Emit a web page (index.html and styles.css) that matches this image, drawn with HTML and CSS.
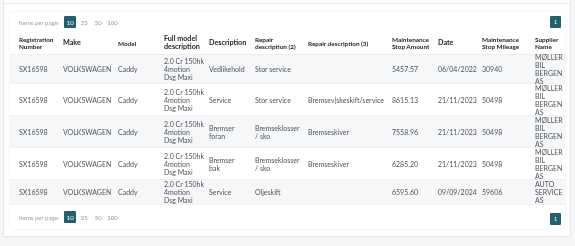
FILE: index.html
```html
<!DOCTYPE html>
<html>
<head>
<meta charset="utf-8">
<link rel="stylesheet" href="styles.css">
</head>
<body>
<div class="outer">
  <div class="topbar"></div>
  <div class="card">
    <div class="pager">
      <div class="sizes">
        <span class="label">Items per page:</span>
        <span class="size active">10</span>
        <span class="size">25</span>
        <span class="size">50</span>
        <span class="size">100</span>
      </div>
      <span class="page active">1</span>
    </div>
    <table class="grid">
      <colgroup>
        <col style="width:53px"><col style="width:55px"><col style="width:46px"><col style="width:45px"><col style="width:46px"><col style="width:53px"><col style="width:84px"><col style="width:46px"><col style="width:44px"><col style="width:53px"><col style="width:30px">
      </colgroup>
      <thead>
        <tr>
          <th class="sm">Registration Number</th>
          <th class="md">Make</th>
          <th class="sm">Model</th>
          <th class="md">Full model description</th>
          <th class="md">Description</th>
          <th class="sm">Repair description (2)</th>
          <th class="sm">Repair description (3)</th>
          <th class="sm">Maintenance Stop Amount</th>
          <th class="md">Date</th>
          <th class="sm">Maintenance Stop Mileage</th>
          <th class="sm">Supplier Name</th>
        </tr>
      </thead>
      <tbody>
        <tr class="r1">
          <td>SX16598</td><td>VOLKSWAGEN</td><td>Caddy</td><td>2.0&nbsp;Cr&nbsp;150hk 4motion Dsg&nbsp;Maxi</td><td class="desc">Vedlikehold</td><td>Stor service</td><td></td><td>5457.57</td><td>06/04/2022</td><td>30940</td><td class="sup"><div>MØLLER BIL BERGEN AS</div></td>
        </tr>
        <tr>
          <td>SX16598</td><td>VOLKSWAGEN</td><td>Caddy</td><td>2.0&nbsp;Cr&nbsp;150hk 4motion Dsg&nbsp;Maxi</td><td class="desc">Service</td><td>Stor service</td><td>Bremsev|skeskift/service</td><td>8615.13</td><td>21/11/2023</td><td>50498</td><td class="sup"><div>MØLLER BIL BERGEN AS</div></td>
        </tr>
        <tr>
          <td>SX16598</td><td>VOLKSWAGEN</td><td>Caddy</td><td>2.0&nbsp;Cr&nbsp;150hk 4motion Dsg&nbsp;Maxi</td><td class="desc">Bremser foran</td><td>Bremseklosser /&nbsp;sko</td><td>Bremseskiver</td><td>7558.96</td><td>21/11/2023</td><td>50498</td><td class="sup"><div>MØLLER BIL BERGEN AS</div></td>
        </tr>
        <tr>
          <td>SX16598</td><td>VOLKSWAGEN</td><td>Caddy</td><td>2.0&nbsp;Cr&nbsp;150hk 4motion Dsg&nbsp;Maxi</td><td class="desc">Bremser bak</td><td>Bremseklosser /&nbsp;sko</td><td>Bremseskiver</td><td>6285.20</td><td>21/11/2023</td><td>50498</td><td class="sup"><div>MØLLER BIL BERGEN AS</div></td>
        </tr>
        <tr>
          <td>SX16598</td><td>VOLKSWAGEN</td><td>Caddy</td><td>2.0&nbsp;Cr&nbsp;150hk 4motion Dsg&nbsp;Maxi</td><td class="desc">Service</td><td>Oljeskift</td><td></td><td>6595.60</td><td>09/09/2024</td><td>59606</td><td class="sup"><div>AUTO SERVICE AS</div></td>
        </tr>
      </tbody>
    </table>
    <div class="pager bottom">
      <div class="sizes">
        <span class="label">Items per page:</span>
        <span class="size active">10</span>
        <span class="size">25</span>
        <span class="size">50</span>
        <span class="size">100</span>
      </div>
      <span class="page active">1</span>
    </div>
  </div>
</div>
</body>
</html>
```
FILE: styles.css
```css
html, body {
  margin: 0;
  padding: 0;
  background: #f5f6f8;
  font-family: Lato, "Open Sans", sans-serif;
  color: #4a4f55;
}
.outer {
  margin: 0 4px 0 3px;
  background: #fff;
  border: 1px solid #e6e8eb;
  border-top: 0;
  height: 237px;
  box-sizing: border-box;
}
.topbar {
  height: 3px;
  border-bottom: 1px solid #e9ebee;
}
.card {
  margin: 8px 5px 0 6px;
  background: #fff;
  border-radius: 3px;
  box-shadow: 0 0 2px rgba(0,0,0,0.12);
  will-change: transform;
}
.pager {
  display: flex;
  justify-content: space-between;
  align-items: center;
  height: 20px;
  padding: 0 4px 0 9px;
}
.pager.bottom {
  height: 24px;
}
.sizes {
  display: flex;
  align-items: center;
}
.label {
  font-size: 6px;
  color: #9ea3a9;
  margin-right: 3px;
}
.size {
  font-size: 6px;
  color: #8f959b;
  min-width: 12px;
  height: 12px;
  padding: 0 1px;
  box-sizing: border-box;
  display: flex;
  align-items: center;
  justify-content: center;
  margin-left: 2px;
}
.size.active, .page.active {
  background: #245f6c;
  color: #fff;
  border-radius: 1px;
}
.page {
  font-size: 5.5px;
  width: 11px;
  height: 12px;
  display: flex;
  align-items: center;
  justify-content: center;
}
.pager.bottom .page { margin-top: 3px; }
.grid {
  width: 555px;
  table-layout: fixed;
  border-collapse: collapse;
}
.grid th {
  text-align: left;
  font-weight: 700;
  color: #23272b;
  padding: 0 5px 0 0;
  height: 22px;
  vertical-align: middle;
}
.grid th:first-child, .grid td:first-child { padding-left: 9px; }
.grid th:last-child, .grid td:last-child { padding-right: 0; }
.grid th.sm { font-size: 6.4px; line-height: 7px; }
.grid th.md { font-size: 7.2px; line-height: 8px; }
.grid thead tr {
  border-bottom: 1px solid #eceef1;
  box-shadow: 0 1px 1px rgba(0,0,0,0.05);
}
.grid td {
  font-size: 7px;
  line-height: 8px;
  padding: 0 5px 0 0;
  height: 31px;
  vertical-align: middle;
  color: #50555b;
}
.grid td.desc { padding-right: 9px; }
.grid td.sup div {
  height: 20px;
  display: flex;
  align-items: center;
}
.grid tbody tr { border-bottom: 1px solid #eef0f2; }
.grid tbody tr:nth-child(odd) { background: #f6f7f9; }
.grid tbody tr.r1 td { height: 28px; }
.grid tbody tr:last-child td { height: 24px; }
```
